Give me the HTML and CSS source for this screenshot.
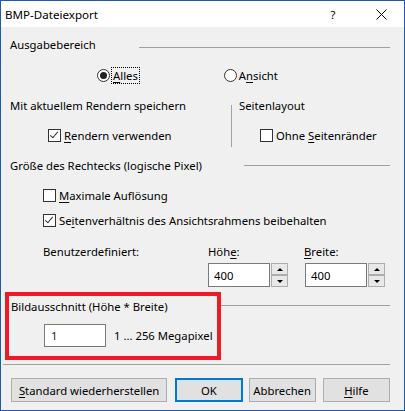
FILE: index.html
```html
<!DOCTYPE html>
<html lang="de">
<head>
  <meta charset="UTF-8">
  <title>BMP-Dateiexport</title>
  <link rel="stylesheet" href="styles.css">
</head>
<body>
  <div class="window">
    <div class="titlebar">
      <span class="title">BMP-Dateiexport</span>
      <span class="help">?</span>
      <span class="close">
        <svg width="11" height="11" viewBox="0 0 11 11"><path d="M0.5 0.5 L10.5 10.5 M10.5 0.5 L0.5 10.5" stroke="#000" stroke-width="1" fill="none"/></svg>
      </span>
    </div>

    <div class="content">
      <div class="group-head head-output">
        <span>Ausgabebereich</span>
        <span class="rule"></span>
      </div>

      <div class="radio-row">
        <label class="radio checked"><span class="dot"></span><span class="focus"><u>A</u>lles</span></label>
        <label class="radio radio-view"><span class="dot"></span><span>A<u>n</u>sicht</span></label>
      </div>

      <div class="split">
        <div class="col-left">
          <div class="sub-head">Mit aktuellem Rendern speichern</div>
          <label class="check checked check-render"><span class="box"></span><span><u>R</u>endern verwenden</span></label>
        </div>
        <div class="vrule"></div>
        <div class="col-right">
          <div class="sub-head">Seitenlayout</div>
          <label class="check check-margins"><span class="box"></span><span>Ohne <u>S</u>eitenränder</span></label>
        </div>
      </div>

      <div class="group-head head-size">
        <span>Größe des Rechtecks (logische Pixel)</span>
        <span class="rule"></span>
      </div>

      <label class="check check-max"><span class="box"></span><span><u>M</u>aximale Auflösung</span></label>
      <label class="check checked check-ratio"><span class="box"></span><span>Se<u>i</u>tenverhältnis des Ansichtsrahmens beibehalten</span></label>

      <div class="custom-labels">
        <span>Benutzerdefiniert:</span>
        <span>Höh<u>e</u>:</span>
        <span><u>B</u>reite:</span>
      </div>

      <div class="spin-row">
        <div class="spinner">
          <div class="spin-input">400</div>
          <div class="spin-buttons">
            <span class="spin-btn"><span class="arrow-up"></span></span>
            <span class="spin-btn"><span class="arrow-down"></span></span>
          </div>
        </div>
        <div class="spinner">
          <div class="spin-input">400</div>
          <div class="spin-buttons">
            <span class="spin-btn"><span class="arrow-up"></span></span>
            <span class="spin-btn"><span class="arrow-down"></span></span>
          </div>
        </div>
      </div>

      <div class="crop-group">
        <div class="highlight">
          <div class="crop-head">Bildausschnitt (Höhe * Breite)</div>
          <div class="crop-row">
            <div class="text-input">1</div>
            <span>1 ... 256 Megapixel</span>
          </div>
        </div>
        <span class="rule crop-rule"></span>
      </div>

      <div class="separator"></div>

      <div class="buttons">
        <button class="btn btn-reset"><u>S</u>tandard wiederherstellen</button>
        <button class="btn btn-ok">OK</button>
        <button class="btn btn-cancel">Abbrechen</button>
        <button class="btn btn-help"><u>H</u>ilfe</button>
      </div>
    </div>
  </div>
</body>
</html>
```

FILE: styles.css
```css
body {
  margin: 0;
  font-family: "Noto Sans", "DejaVu Sans", sans-serif;
  font-size: 11.3px;
  color: #000;
  background: #f0f0f0;
}
u {
  text-decoration-thickness: 1px;
  text-underline-offset: 2px;
}
.window {
  width: 405px;
  height: 411px;
  box-sizing: border-box;
  border: 1px solid #1e5bb0;
  background: #f0f0f0;
  overflow: hidden;
  white-space: nowrap;
}
.titlebar {
  height: 26px;
  background: #fff;
  display: flex;
  align-items: center;
  padding-left: 4px;
}
.title {
  flex: 1;
  font-size: 11.6px;
}
.help {
  width: 12px;
  margin-right: 37px;
  text-align: center;
}
.close {
  display: flex;
  margin-right: 17px;
}
.content {
  padding: 0 14px 0 9px;
}

/* group headers with rule */
.group-head {
  display: flex;
  align-items: center;
  height: 18px;
}
.rule {
  flex: 1;
  height: 1px;
  background: #a0a0a0;
}
.head-output {
  margin-top: 8px;
}
.head-output .rule {
  margin-left: 43px;
  margin-top: 6px;
}
.head-size {
  margin-top: 12px;
}
.head-size .rule {
  margin-left: 42px;
}

/* radios */
.radio-row {
  display: flex;
  align-items: center;
  height: 18px;
  margin-top: 13px;
  padding-left: 87px;
}
.radio {
  display: flex;
  align-items: center;
}
.radio .dot {
  width: 11px;
  height: 11px;
  border: 1px solid #333;
  border-radius: 50%;
  background: #fff;
  margin-right: 2px;
  position: relative;
}
.radio.checked .dot::after {
  content: "";
  position: absolute;
  left: 2px;
  top: 2px;
  width: 7px;
  height: 7px;
  border-radius: 50%;
  background: #222;
}
.radio-view {
  margin-left: 85px;
}
.focus {
  outline: 1px dotted #000;
  outline-offset: 0;
  padding: 0 1px;
  line-height: 15px;
}

/* two columns */
.split {
  display: flex;
  height: 48px;
  margin-top: 12px;
}
.col-left {
  width: 221px;
}
.col-right {
  padding-left: 7px;
}
.vrule {
  flex: none;
  width: 1px;
  height: 42px;
  margin-top: 9px;
  background: #a0a0a0;
}
.sub-head {
  height: 18px;
  display: flex;
  align-items: center;
}

/* checkboxes */
.check {
  display: flex;
  align-items: center;
  height: 18px;
}
.check .box {
  width: 11px;
  height: 11px;
  border: 1px solid #333;
  background: #fff;
  margin-right: 3px;
  position: relative;
}
.check.checked .box::after {
  content: "";
  position: absolute;
  left: 3px;
  top: 0px;
  width: 3px;
  height: 7px;
  border: solid #333;
  border-width: 0 1px 1px 0;
  transform: rotate(40deg);
}
.check-render {
  margin-top: 12px;
  margin-left: 38px;
}
.check-margins {
  margin-top: 12px;
  margin-left: 21px;
}
.check-max {
  margin-top: 12px;
  margin-left: 33px;
}
.check-ratio {
  margin-top: 7px;
  margin-left: 33px;
}

/* custom size */
.custom-labels {
  display: grid;
  grid-template-columns: 165px 96px auto;
  align-items: center;
  height: 18px;
  margin-top: 13px;
  padding-left: 33px;
}
.spin-row {
  display: flex;
  margin-top: 3px;
  padding-left: 198px;
  gap: 17px;
}
.spinner {
  display: flex;
  height: 24px;
}
.spin-input {
  width: 55px;
  height: 22px;
  border: 1px solid #7a7a7a;
  background: #fff;
  padding-left: 5px;
  display: flex;
  align-items: center;
}
.spin-buttons {
  display: flex;
  flex-direction: column;
  justify-content: space-between;
  width: 17px;
  padding-left: 1px;
}
.spin-btn {
  height: 10px;
  border: 1px solid #adadad;
  background: #e8e8e8;
  display: flex;
  align-items: center;
  justify-content: center;
}
.arrow-up {
  border-left: 3px solid transparent;
  border-right: 3px solid transparent;
  border-bottom: 3px solid #000;
}
.arrow-down {
  border-left: 3px solid transparent;
  border-right: 3px solid transparent;
  border-top: 3px solid #000;
}

/* highlighted crop group */
.crop-group {
  display: flex;
  margin-top: 5px;
  margin-left: -5px;
}
.highlight {
  width: 206px;
  height: 60px;
  border: 4px solid #ed1c24;
  padding-left: 2px;
}
.crop-head {
  height: 20px;
  display: flex;
  align-items: center;
}
.crop-row {
  display: flex;
  align-items: center;
  margin-top: 8px;
  padding-left: 33px;
}
.text-input {
  width: 54px;
  height: 21px;
  border: 1px solid #7a7a7a;
  background: #fff;
  padding-left: 6px;
  display: flex;
  align-items: center;
  margin-right: 8px;
  color: #1a1a4a;
}
.crop-rule {
  margin-top: 13px;
}

.separator {
  height: 1px;
  background: #a0a0a0;
  margin: 4px 0 0 -7px;
}

/* buttons */
.buttons {
  display: flex;
  margin-top: 13px;
}
.btn {
  height: 24px;
  width: 68px;
  padding: 0;
  font-family: inherit;
  font-size: 11.3px;
  color: #000;
  background: #e1e1e1;
  border: 1px solid #adadad;
}
.btn-reset {
  width: 158px;
  margin-left: 1px;
}
.btn-ok {
  margin-left: 8px;
  border: 2px solid #0078d7;
}
.btn-cancel {
  margin-left: 6px;
}
.btn-help {
  margin-left: 7px;
}
```
